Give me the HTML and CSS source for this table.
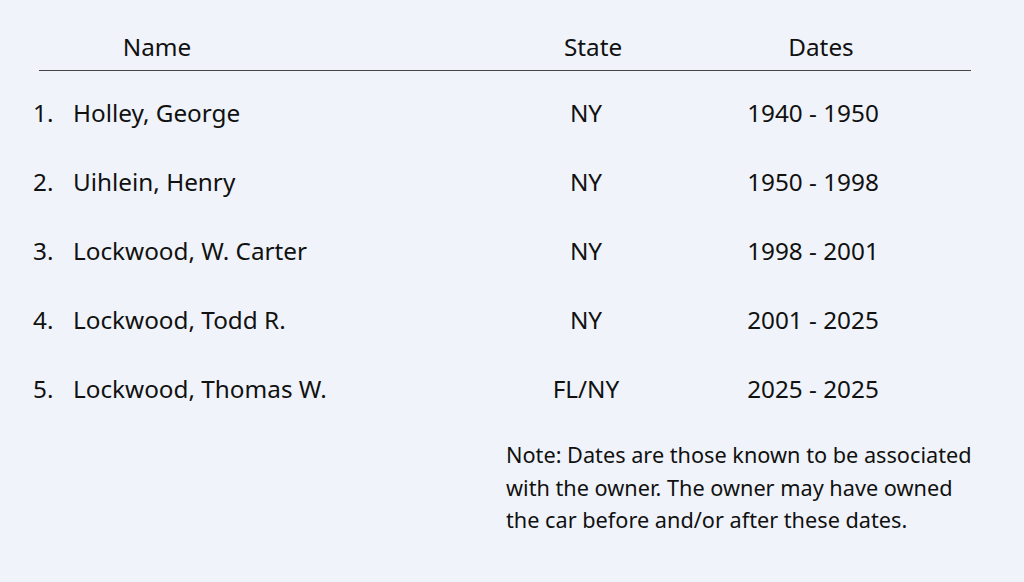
FILE: index.html
```html
<!DOCTYPE html>
<html>
<head>
<meta charset="utf-8">
<link rel="stylesheet" href="styles.css">
</head>
<body>
<div class="page">
  <div class="table">
    <div class="head">
      <div class="h-name">Name</div>
      <div class="h-state">State</div>
      <div class="h-dates">Dates</div>
    </div>
    <ol class="rows">
      <li class="row"><span class="num">1.</span><span class="name">Holley, George</span><span class="state">NY</span><span class="dates">1940 - 1950</span></li>
      <li class="row"><span class="num">2.</span><span class="name">Uihlein, Henry</span><span class="state">NY</span><span class="dates">1950 - 1998</span></li>
      <li class="row"><span class="num">3.</span><span class="name">Lockwood, W. Carter</span><span class="state">NY</span><span class="dates">1998 - 2001</span></li>
      <li class="row"><span class="num">4.</span><span class="name">Lockwood, Todd R.</span><span class="state">NY</span><span class="dates">2001 - 2025</span></li>
      <li class="row"><span class="num">5.</span><span class="name">Lockwood, Thomas W.</span><span class="state">FL/NY</span><span class="dates">2025 - 2025</span></li>
    </ol>
    <p class="note">Note: Dates are those known to be associated with the owner. The owner may have owned the car before and/or after these dates.</p>
  </div>
</div>
</body>
</html>
```
FILE: styles.css
```css
html, body {
  margin: 0;
  padding: 0;
  background: #f0f4fa;
}
body {
  font-family: "Noto Sans", "Open Sans", sans-serif;
  color: #111;
  width: 1024px;
  height: 582px;
  overflow: hidden;
}
.page {
  padding: 30px 0 0 33px;
}
.table {
  width: 938px;
}
.head {
  display: grid;
  grid-template-columns: 236px 204px 228px 228px;
  margin-left: 6px;
  width: 932px;
  font-size: 24.3px;
  line-height: 34px;
  padding-bottom: 6px;
  border-bottom: 1px solid #444;
}
.h-name, .h-state, .h-dates {
  text-align: center;
}
.h-state { grid-column: 3; }
.h-dates { grid-column: 4; }
.rows {
  list-style: none;
  margin: 0;
  padding: 25px 0 0 0;
  display: flex;
  flex-direction: column;
  gap: 35px;
}
.row {
  display: grid;
  grid-template-columns: 40px 399px 228px 226px;
  font-size: 24.3px;
  line-height: 34px;
}
.state, .dates { text-align: center; }
.note {
  margin: 33px 0 0 473px;
  width: 480px;
  font-size: 21.7px;
  line-height: 32.5px;
}
```
